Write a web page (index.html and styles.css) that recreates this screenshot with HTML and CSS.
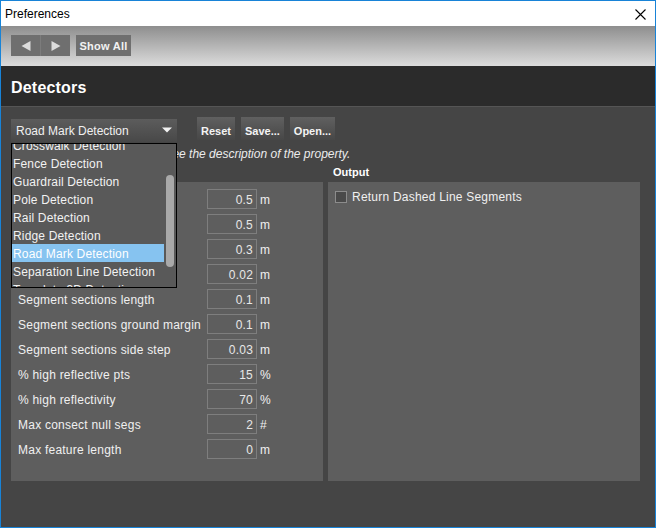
FILE: index.html
```html
<!DOCTYPE html>
<html>
<head>
<meta charset="utf-8">
<link rel="stylesheet" href="styles.css">
</head>
<body>
<div class="window">
  <div class="titlebar">
    <span class="title">Preferences</span>
    <svg class="close" width="11" height="11" viewBox="0 0 11 11"><path d="M0.5 0.5 L10.5 10.5 M10.5 0.5 L0.5 10.5" stroke="#000" stroke-width="1.1" fill="none"/></svg>
  </div>
  <div class="toolbar">
    <div class="navgroup">
      <div class="navbtn back"><svg width="10" height="10" viewBox="0 0 10 10"><path d="M9.5 0 L9.5 10 L0.5 5 Z" fill="#dcdcdc"/></svg></div>
      <div class="navbtn fwd"><svg width="10" height="10" viewBox="0 0 10 10"><path d="M0.5 0 L0.5 10 L9.5 5 Z" fill="#dcdcdc"/></svg></div>
    </div>
    <div class="showall">Show All</div>
  </div>
  <div class="header">Detectors</div>
  <div class="content">
    <div class="controls">
      <div class="combo">
        <span>Road Mark Detection</span>
        <svg width="10" height="6" viewBox="0 0 10 6"><path d="M0 0.5 L10 0.5 L5 5.5 Z" fill="#f2f2f2"/></svg>
        <div class="popup">
          <ul class="items">
            <li>Crosswalk Detection</li>
            <li>Fence Detection</li>
            <li>Guardrail Detection</li>
            <li>Pole Detection</li>
            <li>Rail Detection</li>
            <li>Ridge Detection</li>
            <li class="selected">Road Mark Detection</li>
            <li>Separation Line Detection</li>
            <li>Template 3D Detection</li>
          </ul>
          <div class="thumb"></div>
        </div>
      </div>
      <div class="btn">Reset</div>
      <div class="btn">Save...</div>
      <div class="btn">Open...</div>
    </div>
    <p class="hint">Hover over a parameter to see the description of the property.</p>
    <div class="columns">
      <section class="col">
        <h3 class="colhead">Parameters</h3>
        <div class="panel params">
          <span class="lbl">Line width</span><span class="field">0.5</span><span class="unit">m</span>
          <span class="lbl">Line width tolerance</span><span class="field">0.5</span><span class="unit">m</span>
          <span class="lbl">Min line length</span><span class="field">0.3</span><span class="unit">m</span>
          <span class="lbl">Height tolerance</span><span class="field">0.02</span><span class="unit">m</span>
          <span class="lbl">Segment sections length</span><span class="field">0.1</span><span class="unit">m</span>
          <span class="lbl">Segment sections ground margin</span><span class="field">0.1</span><span class="unit">m</span>
          <span class="lbl">Segment sections side step</span><span class="field">0.03</span><span class="unit">m</span>
          <span class="lbl">% high reflective pts</span><span class="field">15</span><span class="unit">%</span>
          <span class="lbl">% high reflectivity</span><span class="field">70</span><span class="unit">%</span>
          <span class="lbl">Max consect null segs</span><span class="field">2</span><span class="unit">#</span>
          <span class="lbl">Max feature length</span><span class="field">0</span><span class="unit">m</span>
        </div>
      </section>
      <section class="col">
        <h3 class="colhead">Output</h3>
        <div class="panel output">
          <div class="check"><span class="box"></span><span>Return Dashed Line Segments</span></div>
        </div>
      </section>
    </div>
  </div>
</div>
</body>
</html>
```

FILE: styles.css
```css
* { box-sizing: border-box; }
html, body { margin: 0; padding: 0; }
body {
  width: 656px;
  height: 528px;
  overflow: hidden;
  font-family: "Liberation Sans", Arial, sans-serif;
}
.window {
  width: 656px;
  height: 528px;
  border: 1px solid #1883d7;
  background: #454545;
  display: flex;
  flex-direction: column;
}
.titlebar {
  height: 25px;
  flex: none;
  background: #fff;
  display: flex;
  align-items: center;
  justify-content: space-between;
  padding: 0 9px 0 4px;
  font-size: 12px;
  color: #000;
}
.close { display: block; margin-top: 1px; }
.toolbar {
  height: 40px;
  flex: none;
  background: linear-gradient(#8e8e8e, #dcdcdc);
  display: flex;
  align-items: flex-start;
  padding: 9px 0 0 10px;
  gap: 6px;
}
.navgroup { display: flex; }
.navbtn {
  height: 21px;
  background: #6f6f6f;
  display: flex;
  align-items: center;
  justify-content: center;
}
.navbtn.back { width: 30px; border-right: 1px solid #7c7c7c; }
.navbtn.fwd { width: 29px; }
.navbtn svg { display: block; }
.showall {
  width: 55px;
  height: 21px;
  background: #6f6f6f;
  color: #f2f2f2;
  font-size: 11px;
  font-weight: bold;
  letter-spacing: 0.25px;
  display: flex;
  align-items: center;
  justify-content: center;
  padding-top: 1px;
}
.header {
  height: 41px;
  flex: none;
  background: #2b2b2b;
  border-bottom: 1px solid #555;
  color: #fff;
  font-size: 16px;
  font-weight: bold;
  letter-spacing: 0.2px;
  display: flex;
  align-items: center;
  padding: 3px 0 0 10px;
}
.content {
  flex: 1;
  padding: 10px 14px 0 10px;
}
.controls {
  display: flex;
  gap: 6px;
  align-items: flex-start;
}
.combo {
  position: relative;
  width: 166px;
  height: 23px;
  margin-top: 2px;
  margin-right: 14px;
  background: linear-gradient(#5c5c5c, #484848);
  color: #f0f0f0;
  font-size: 12px;
  display: flex;
  align-items: center;
  justify-content: space-between;
  padding: 0 5px 0 5px;
}
.combo svg { display: block; margin-top: -1px; }
.btn {
  height: 23px;
  padding: 4px 4px 0;
  background: linear-gradient(#606060, #474747);
  color: #f4f4f4;
  font-size: 11px;
  font-weight: bold;
  display: flex;
  align-items: center;
}
.popup {
  position: absolute;
  left: 0;
  top: 24px;
  width: 166px;
  height: 145px;
  border: 1px solid #000;
  background: #595959;
  overflow: hidden;
  z-index: 5;
}
.items {
  list-style: none;
  margin: -8px 0 0;
  padding: 0;
  width: 152px;
}
.items li {
  height: 18px;
  line-height: 18px;
  padding: 1px 0 0 1px;
  color: #f2f2f2;
  font-size: 12px;
  letter-spacing: 0.16px;
  white-space: nowrap;
}
.items li.selected { background: #86c3f0; color: #fff; }
.thumb {
  position: absolute;
  left: 154px;
  top: 31px;
  width: 8px;
  height: 92px;
  border-radius: 4px;
  background: #a9a9a9;
}
.hint {
  margin: 4px 0 0;
  padding-left: 12px;
  height: 16px;
  line-height: 16px;
  font-size: 12px;
  font-style: italic;
  color: #ececec;
  white-space: nowrap;
}
.columns {
  display: grid;
  grid-template-columns: 312px 312px;
  column-gap: 5px;
  margin-top: 2px;
}
.colhead {
  margin: 0;
  height: 16px;
  line-height: 16px;
  padding-left: 5px;
  font-size: 11px;
  font-weight: bold;
  color: #fff;
}
.panel {
  margin-top: 2px;
  height: 299px;
  background: #5e5e5e;
}
.params {
  display: grid;
  grid-template-columns: 189px 50px auto;
  grid-auto-rows: 20px;
  row-gap: 5px;
  align-content: start;
  padding: 7px 0 0 7px;
  font-size: 12px;
  color: #f0f0f0;
}
.lbl { line-height: 20px; padding-top: 1px; white-space: nowrap; letter-spacing: 0.23px; }
.field {
  border: 1px solid #7e7e7e;
  text-align: right;
  padding: 1px 3px 0 0;
  line-height: 18px;
  color: #e8e8e8;
  letter-spacing: 0.2px;
}
.unit { line-height: 20px; padding: 1px 0 0 3px; letter-spacing: 0.2px; }
.output { padding: 5px 0 0 7px; }
.check {
  display: flex;
  align-items: center;
  height: 20px;
  font-size: 12px;
  color: #f0f0f0;
  letter-spacing: 0.22px;
}
.box {
  width: 12px;
  height: 12px;
  border: 1px solid #8c8c8c;
  background: #4a4a4a;
  margin-right: 5px;
}
```
